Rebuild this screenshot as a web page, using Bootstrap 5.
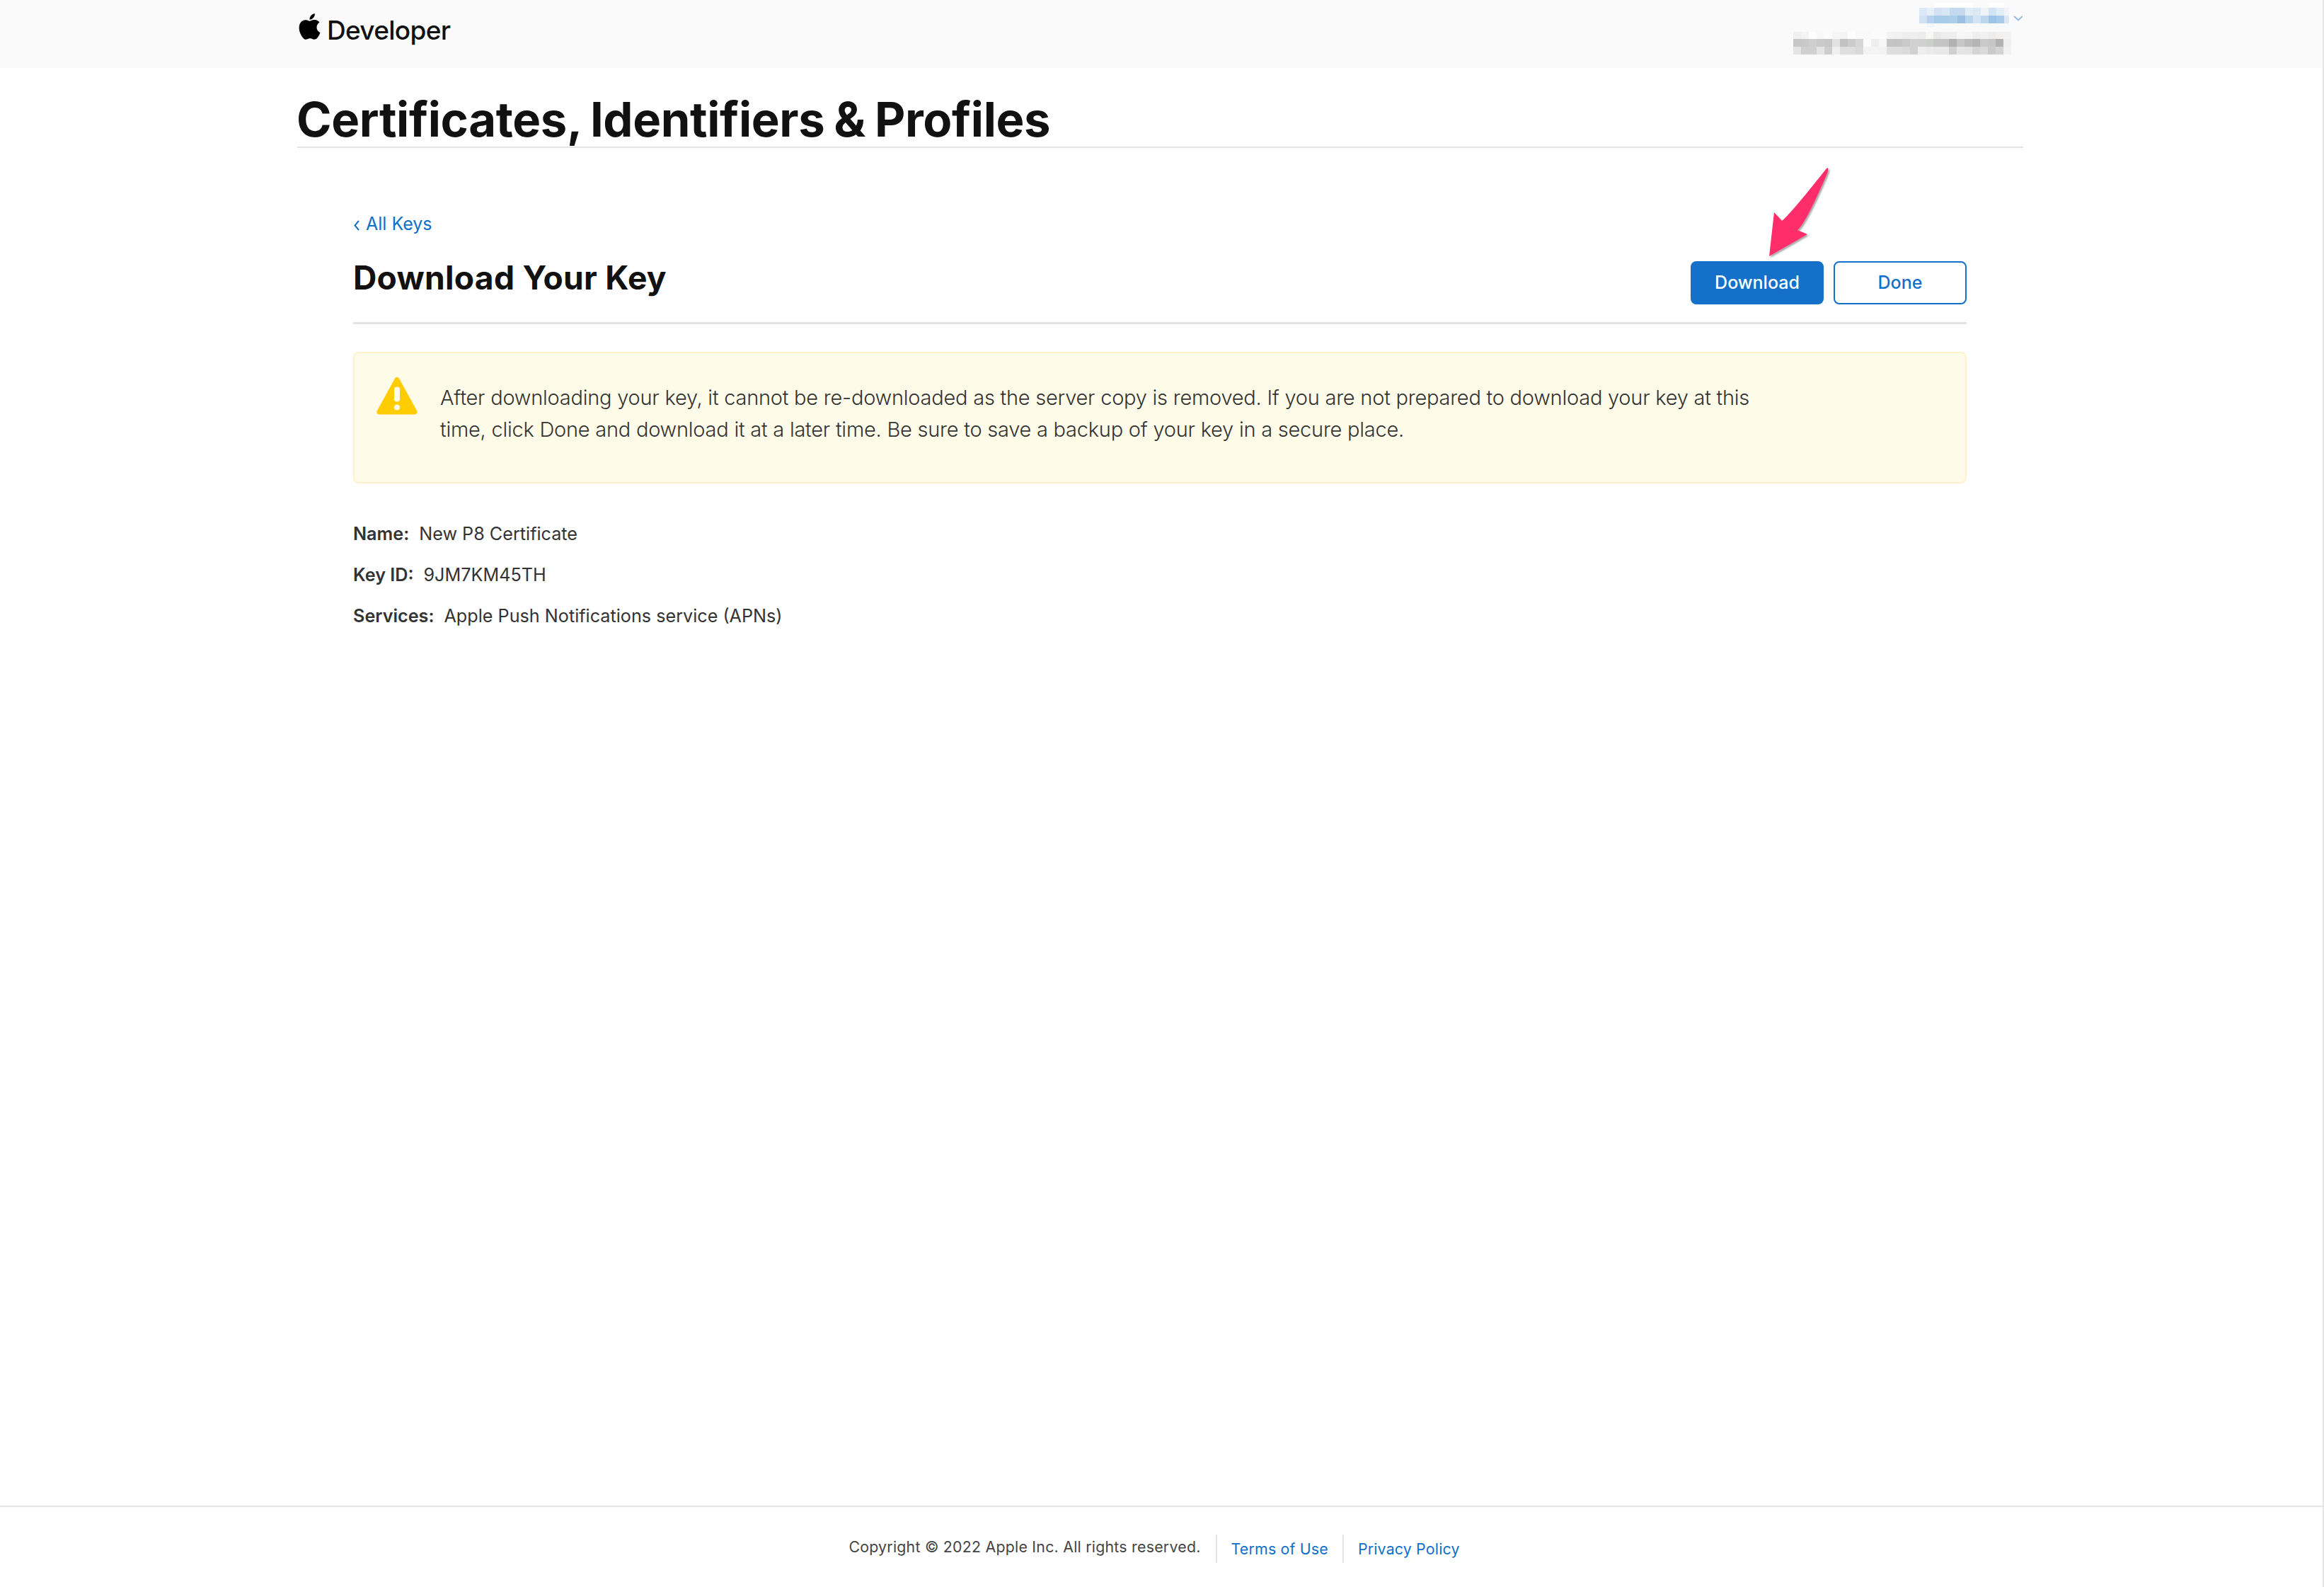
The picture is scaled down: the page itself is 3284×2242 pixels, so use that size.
<!DOCTYPE html>
<html lang="en">
<head>
<meta charset="utf-8">
<title>Download Your Key</title>
<link href="https://cdn.jsdelivr.net/npm/bootstrap@5.3.0/dist/css/bootstrap.min.css" rel="stylesheet">
<style>
html,body{height:100%;}
body{font-family:Inter,"Liberation Sans",sans-serif;color:#333;background:#fff;}
a{color:#0f70c9;text-decoration:none;}
.frame{min-height:2242px;border-right:2px solid #e5e5e5;position:relative;}
.topbar{height:96px;background:#fafafa;padding-left:422px;padding-right:424px;}
.brand{padding-top:19px;gap:8px;color:#111;font-size:37px;font-weight:500;line-height:37px;letter-spacing:-.7px;}
.brand svg{width:32px;height:37px;flex:none;}
.brand-text{margin-top:5px;}
.who{width:330px;height:96px;}
.title-wrap{width:2439px;margin-left:420px;height:113px;border-bottom:2px solid #e4e4e4;}
.page-title{font-size:67px;line-height:66px;font-weight:700;color:#111;margin:0 0 0 -1px;padding-top:40px;letter-spacing:-.37px;word-spacing:-2.5px;}
.content{margin-left:499px;width:2280px;}
.back{padding-top:91px;font-size:25px;line-height:32px;height:128px;}
.back svg{width:10px;height:18px;margin-right:8px;}
.head-rule{border-bottom:3px solid #e3e3e3;height:121px;}
.sub-title{font-size:46.2px;line-height:56px;font-weight:700;color:#111;margin:0;padding-top:27px;letter-spacing:.25px;}
.act{width:188px;height:61px;padding:0;font-size:25px;font-weight:500;border-radius:8px;border-width:2px;}
.act-fill{--bs-btn-bg:#1570c9;--bs-btn-border-color:#1570c9;--bs-btn-color:#fff;}
.act-line{--bs-btn-color:#1570c9;--bs-btn-border-color:#1570c9;--bs-btn-bg:#fff;}
.btn-set{gap:14px;padding-top:32px;}
.note{margin:39px 0 0;height:186px;padding:33px 30px 0;background:#fffbe9;border:2px solid #fdf2cc;border-radius:8px;color:#333;gap:31px;}
.note svg{width:60px;height:56px;flex:none;}
.note p{font-size:29px;line-height:45px;font-weight:300;margin:7px 0 0;width:1870px;letter-spacing:-.24px;}
.facts{padding-top:42px;font-size:25.2px;line-height:58px;}
.facts b{font-weight:600;margin-right:14px;}
.bottom{position:absolute;left:0;right:0;top:2127px;height:115px;padding-top:5px;border-top:2px solid #e4e4e4;font-size:21.3px;letter-spacing:.25px;}
.bottom-copy{color:#444;padding-right:21px;margin-top:-4px;}
.bottom-link{border-left:2px solid #e4e4e4;height:40px;line-height:40px;padding:0 20px;letter-spacing:.2px;}
.arrow{position:absolute;left:2490px;top:230px;width:110px;height:140px;overflow:visible;}
</style>
</head>
<body>
<div class="frame">
  <header class="topbar d-flex justify-content-between">
    <div class="brand d-flex align-items-start">
      <svg viewBox="0 0 14 16" aria-hidden="true"><path transform="translate(-1.2 0)" fill="#000" d="M11.182.008C11.148-.03 9.923.023 8.857 1.18c-1.066 1.156-.902 2.482-.878 2.516.024.034 1.52.087 2.475-1.258.955-1.345.762-2.391.728-2.43Zm3.314 11.733c-.048-.096-2.325-1.234-2.113-3.422.212-2.189 1.675-2.789 1.698-2.854.023-.065-.597-.79-1.254-1.157a3.692 3.692 0 0 0-1.563-.434c-.108-.003-.483-.095-1.254.116-.508.139-1.653.589-1.968.607-.316.018-1.256-.522-2.267-.665-.647-.125-1.333.131-1.824.328-.49.196-1.422.754-2.074 2.237-.652 1.482-.311 3.83-.067 4.56.244.729.625 1.924 1.273 2.796.576.984 1.34 1.667 1.659 1.899.319.232 1.219.386 1.843.067.502-.308 1.408-.485 1.766-.472.357.013 1.061.154 1.782.539.571.197 1.111.115 1.652-.105.541-.221 1.324-1.059 2.238-2.758.347-.79.505-1.217.473-1.282Z"/></svg>
      <span class="brand-text">Developer</span>
    </div>
    <svg class="who" viewBox="2528 0 330 96" shape-rendering="crispEdges" aria-hidden="true">
      <g>
        <rect x="2733" y="4" width="55" height="7" fill="#fff"/><rect x="2810" y="4" width="22" height="7" fill="#fff"/>
        <rect x="2712" y="11" width="11" height="11" fill="#dbe8f5"/><rect x="2723" y="11" width="11" height="11" fill="#e6eff6"/><rect x="2733" y="11" width="11" height="11" fill="#d3e3f3"/><rect x="2744" y="11" width="11" height="11" fill="#d9e6f3"/><rect x="2755" y="11" width="11" height="11" fill="#c2d8ee"/><rect x="2766" y="11" width="11" height="11" fill="#c6daef"/><rect x="2777" y="11" width="11" height="11" fill="#e2ecf6"/><rect x="2788" y="11" width="11" height="11" fill="#dce8f4"/><rect x="2799" y="11" width="11" height="11" fill="#eef3f8"/><rect x="2810" y="11" width="11" height="11" fill="#d2e4f3"/><rect x="2821" y="11" width="11" height="11" fill="#e2edf5"/><rect x="2832" y="11" width="7" height="11" fill="#f1f5f9"/>
        <rect x="2712" y="22" width="11" height="11" fill="#cfe1f3"/><rect x="2723" y="22" width="11" height="11" fill="#b6d2ec"/><rect x="2733" y="22" width="11" height="11" fill="#a6cbe8"/><rect x="2744" y="22" width="11" height="11" fill="#a8cce8"/><rect x="2755" y="22" width="11" height="11" fill="#abcee9"/><rect x="2766" y="22" width="11" height="11" fill="#9cc0e5"/><rect x="2777" y="22" width="11" height="11" fill="#bad6ed"/><rect x="2788" y="22" width="11" height="11" fill="#d2e3f3"/><rect x="2799" y="22" width="11" height="11" fill="#bed6ec"/><rect x="2810" y="22" width="11" height="11" fill="#9cc4e6"/><rect x="2821" y="22" width="11" height="11" fill="#a8cbea"/><rect x="2832" y="22" width="7" height="11" fill="#dce8f5"/>
        <rect x="2723" y="33" width="11" height="6" fill="#f3f7fa"/><rect x="2788" y="33" width="22" height="6" fill="#f6f8fa"/><rect x="2821" y="33" width="18" height="6" fill="#f6f8fa"/>
        <path d="M2846 23l6 5.5 6-5.5" fill="none" stroke="#8fbce6" stroke-width="2" shape-rendering="auto"/>
      </g>
      <g id="grays"></g>
    </svg>
  </header>
  <div class="title-wrap"><h1 class="page-title">Certificates, Identifiers &amp; Profiles</h1></div>
  <main class="content">
    <div class="back"><a href="#"><svg viewBox="0 0 10 18" aria-hidden="true"><path d="M8 3L2.5 9.5 8 16" fill="none" stroke="#0f70c9" stroke-width="2"/></svg>All Keys</a></div>
    <div class="head-rule d-flex justify-content-between align-items-start">
      <h2 class="sub-title">Download Your Key</h2>
      <div class="d-flex btn-set">
        <a href="#" class="btn btn-primary act act-fill d-flex align-items-center justify-content-center">Download</a>
        <a href="#" class="btn btn-outline-primary act act-line d-flex align-items-center justify-content-center">Done</a>
      </div>
    </div>
    <div class="alert note d-flex align-items-start">
      <svg viewBox="0 0 60 56" aria-hidden="true"><path d="M30 4.5 L55 50 H5 Z" fill="#fc0" stroke="#fc0" stroke-width="7" stroke-linejoin="round"/><rect x="26" y="14.5" width="8" height="21" rx="4" fill="#fffbe9"/><circle cx="30" cy="43.5" r="4" fill="#fffbe9"/></svg>
      <p>After downloading your key, it cannot be re-downloaded as the server copy is removed. If you are not prepared to download your key at this time, click Done and download it at a later time. Be sure to save a backup of your key in a secure place.</p>
    </div>
    <div class="facts">
      <div><b>Name:</b>New P8 Certificate</div>
      <div><b>Key ID:</b>9JM7KM45TH</div>
      <div><b>Services:</b>Apple Push Notifications service (APNs)</div>
    </div>
  </main>
  <svg class="arrow" viewBox="2490 230 110 140" aria-hidden="true">
    <defs><filter id="as" x="-20%" y="-20%" width="150%" height="150%"><feDropShadow dx="2" dy="2" stdDeviation="1.2" flood-color="#000" flood-opacity=".35"/></filter></defs>
    <path filter="url(#as)" fill="#ff2d6b" d="M2583 237 Q2584 240 2582 245 Q2552 315 2540 325 L2554 331 L2500 362 L2507 300 L2518 312 Q2532 300 2581 238 Z"/>
  </svg>
  <footer class="bottom d-flex align-items-center justify-content-center">
    <span class="bottom-copy">Copyright © 2022 Apple Inc. All rights reserved.</span>
    <a class="bottom-link" href="#">Terms of Use</a>
    <a class="bottom-link" href="#">Privacy Policy</a>
  </footer>
</div>
<script src="https://cdn.jsdelivr.net/npm/bootstrap@5.3.0/dist/js/bootstrap.bundle.min.js"></script>
<script>
var rows=[[45,10,"efefef f4f4f4 fefefe f9f9f9 fbfbfb f6f6f6 f4f4f4 fdfdfd f9f9f9 f9f9f9 fbfbfb fbfbfb f3f3f3 f2f2f2 eeeeee eeeeee ececec f7f7f5 e9e9e9 eeeeec eeeeee f7f7f7 f5f5f5 eeeeee f2f1ef ededed f1f0ee f3f3f3"],
[55,11,"c7c7c7 c9c9c9 cfcfcf c9c9c9 c7c7c7 e2e2e2 c2c2c2 cbcbcb d6d6d6 fbfbfb eeeeee f6f6f6 c5c5c5 c4c4c4 c9c9c9 d1d1d1 d0d0d0 cdcfcd c5c5c5 c4c4c4 b1b1b1 c6c6c6 bcbcbc b5b5b5 c9c9c9 c7c7c7 b2b2b2 efefef"],
[66,11,"e4e4e4 cfcfcf d0d0d0 e5e5e5 cdcdcd f0f0f0 dfdfdf dedede d9d9d9 f3f3f3 f4f4f4 f3f3f3 dedede dedede dadada d1d1d1 eeeeee ebebeb e8e8e8 e8e8e8 d0d0d0 e5e5e5 e3e3e3 d5d5d5 dadada cacaca d3d3d3 f1f1f1"]];
var g=document.getElementById('grays'),ns='http://www.w3.org/2000/svg';
rows.forEach(function(r){r[2].split(' ').forEach(function(c,i){var e=document.createElementNS(ns,'rect');e.setAttribute('x',2534+i*11);e.setAttribute('y',r[0]);e.setAttribute('width',11);e.setAttribute('height',r[1]);e.setAttribute('fill','#'+c);g.appendChild(e);});});
</script>
</body>
</html>
